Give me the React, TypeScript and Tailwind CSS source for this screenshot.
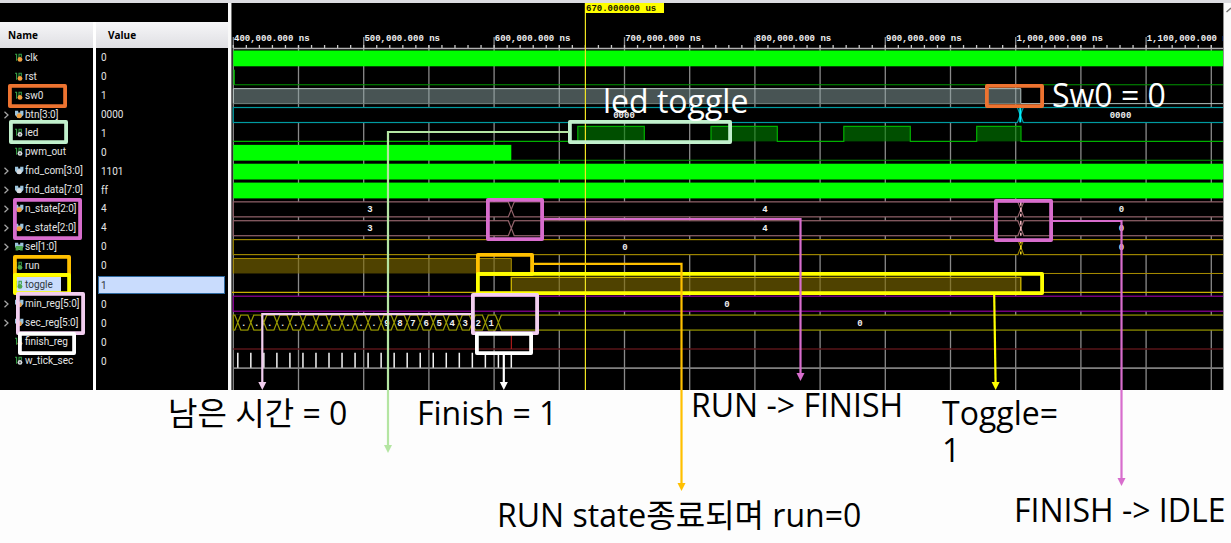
import React from "react";

type Kind = "in" | "out" | "busIn" | "busOut" | "reg" | "busReg" | "var" | "busVar";

interface Signal {
  name: string;
  value: string;
  kind: Kind;
}

const signals: Signal[] = [
  { name: "clk", value: "0", kind: "in" },
  { name: "rst", value: "0", kind: "in" },
  { name: "sw0", value: "1", kind: "in" },
  { name: "btn[3:0]", value: "0000", kind: "busIn" },
  { name: "led", value: "1", kind: "out" },
  { name: "pwm_out", value: "0", kind: "out" },
  { name: "fnd_com[3:0]", value: "1101", kind: "busOut" },
  { name: "fnd_data[7:0]", value: "ff", kind: "busOut" },
  { name: "n_state[2:0]", value: "4", kind: "busReg" },
  { name: "c_state[2:0]", value: "4", kind: "busReg" },
  { name: "sel[1:0]", value: "0", kind: "busVar" },
  { name: "run", value: "0", kind: "var" },
  { name: "toggle", value: "1", kind: "var" },
  { name: "min_reg[5:0]", value: "0", kind: "busReg" },
  { name: "sec_reg[5:0]", value: "0", kind: "busReg" },
  { name: "finish_reg", value: "0", kind: "reg" },
  { name: "w_tick_sec", value: "0", kind: "out" },
];

const SELECTED = "toggle";

/* Geometry of the wave area, in window pixels. */
const X0 = 233.3;
const X1 = 1223;
const STEP = 65.2;
const ROW = 18.87;
const hi = (row: number) => 50.9 + ROW * row;
const lo = (row: number) => hi(row) + 15;
const T_FINISH = 511.3;
const T_IDLE = 1020.8;
const TICK0 = 237.8;
const TICK = 13.03;

function SignalIcon({ kind }: { kind: Kind }) {
  const bus = kind.startsWith("bus");
  const dot =
    kind === "in" || kind === "busIn" || kind === "busReg" || kind === "reg"
      ? "#f0a040"
      : kind === "var" || kind === "busVar"
        ? "#4ea850"
        : "#d8dce0";
  return (
    <svg width="9" height="10" viewBox="0 0 9 10" aria-hidden="true" className="shrink-0">
      {bus ? (
        <>
          <path d="M0 0.8H3.2V2.6H5.2V0.8H8.4V5L5.6 8H2.8L0 5Z" fill="#9cc4dc" />
          {kind === "busVar" ? (
            <path d="M0.6 4H7.8V8.5H5.4L4.2 7.2L3 8.5H0.6Z" fill={dot} />
          ) : (
            <circle cx="4.2" cy="5.8" r="2.5" fill={dot} />
          )}
        </>
      ) : (
        <>
          <path d="M0 1.3H1.6V7.8M4 8V1.3H6.3V4" fill="none" stroke="#36a046" strokeWidth="1.1" />
          <circle cx="5" cy="6.4" r="2.4" fill={dot} />
          {kind === "out" && <circle cx="5" cy="6.4" r="0.9" fill="#555" />}
        </>
      )}
    </svg>
  );
}

function SignalTable() {
  return (
    <table className="h-[368px] w-full table-fixed border-separate border-spacing-0 text-left font-['Roboto',sans-serif] text-[10px] leading-[18px] text-[#e4e4e4]">
      <colgroup>
        <col className="w-[96px]" />
        <col />
      </colgroup>
      <thead>
        <tr className="h-[26px] bg-linear-to-b from-[#f6f6f8] to-[#dfdfe3] font-['Open_Sans',sans-serif] text-black">
          <th scope="col" className="border-r-3 border-white py-0 pr-0 pl-2 font-bold">Name</th>
          <th scope="col" className="py-0 pr-0 pl-3 font-bold">Value</th>
        </tr>
      </thead>
      <tbody>
        {signals.map((s) => {
          const selected = s.name === SELECTED;
          return (
            <tr key={s.name} aria-selected={selected}>
              <td className="border-r-3 border-white px-0 pt-px pb-0">
                <div className="flex h-[17px] items-center pl-1">
                  <div className="flex w-[11px] shrink-0 items-center">
                    {s.kind.startsWith("bus") && (
                      <button type="button" aria-label={`Expand ${s.name}`} className="flex">
                        <svg width="5" height="8" viewBox="0 0 5 8" aria-hidden="true">
                          <path d="M0.5 0.8L4 4L0.5 7.2" fill="none" stroke="#a8a8a8" strokeWidth="1.2" />
                        </svg>
                      </button>
                    )}
                  </div>
                  <div
                    className={
                      selected
                        ? "flex items-center gap-px bg-[#c9dcfd] pr-2 text-[#303840]"
                        : "flex items-center gap-px"
                    }
                  >
                    <SignalIcon kind={s.kind} />
                    <span>{s.name}</span>
                  </div>
                </div>
              </td>
              <td className="pt-px pr-[3px] pb-0 pl-[2px]">
                <div
                  className={
                    selected
                      ? "h-[18px] border border-[#2f6aa0] bg-[#c9dcfd] px-[2px] leading-[17px] text-[#303840]"
                      : "h-[17px] px-[3px]"
                  }
                >
                  {s.value}
                </div>
              </td>
            </tr>
          );
        })}
        <tr aria-hidden="true" className="h-[20px]">
          <td className="border-r-3 border-white p-0" />
          <td className="p-0" />
        </tr>
      </tbody>
    </table>
  );
}

function BusLine({ row, color, cuts = [] }: { row: number; color: string; cuts?: number[] }) {
  const t = hi(row);
  const b = lo(row);
  return (
    <g stroke={color} strokeWidth="1.2" fill="none">
      <rect x={X0} y={t} width={X1 - X0 + 4} height={b - t} fill="#000" />
      {cuts.map((x) => (
        <g key={x}>
          <path d={`M${x - 2.5} ${t}H${x + 2.5}M${x - 2.5} ${b}H${x + 2.5}`} stroke="#000" strokeWidth="1.8" />
          <path d={`M${x - 3} ${t}L${x + 3} ${b}M${x + 3} ${t}L${x - 3} ${b}`} />
        </g>
      ))}
    </g>
  );
}

function Label({ x, row, children }: { x: number; row: number; children: string }) {
  return (
    <text x={x} y={hi(row) + 10.6} textAnchor="middle" fill="#f0f0f0">
      {children}
    </text>
  );
}

const rulerLabels = [
  "400,000.000 ns",
  "500,000.000 ns",
  "600,000.000 ns",
  "700,000.000 ns",
  "800,000.000 ns",
  "900,000.000 ns",
  "1,000,000.000 ns",
  "1,100,000.000 ns",
];

const ledPulses: [number, number][] = [
  [577.8, 644.3],
  [711, 777.3],
  [843.8, 910.3],
  [976.7, 1021],
];

function Waves() {
  const minor = Array.from({ length: 76 }, (_, i) => X0 + (i * STEP) / 5);
  const half = Array.from({ length: 16 }, (_, i) => X0 + i * STEP);
  const secLabels = [...Array<string>(11).fill("."), "9", "8", "7", "6", "5", "4", "3", "2", "1"];
  const secCuts = Array.from({ length: 21 }, (_, i) => TICK0 + i * TICK);
  const ledPath =
    `M${X0} ${lo(4)}` +
    ledPulses.map(([a, b]) => `H${a}V${hi(4)}H${b}V${lo(4)}`).join("") +
    `H${X1}`;
  return (
    <svg
      viewBox="232 3 991 387"
      preserveAspectRatio="xMinYMin meet"
      role="img"
      aria-label="Simulation waveforms"
      className="block h-[387px] w-full font-['Liberation_Mono',monospace] text-[9px] font-bold"
    >
      <g stroke="#8a8a8a" strokeWidth="1.3">
        {half.map((x, i) => (
          <path key={x} d={`M${x} ${i % 2 === 0 ? 37 : 45}V390`} />
        ))}
        {minor.map((x) => (
          <path key={x} d={`M${x} 45V48`} stroke="#c8c8c8" />
        ))}
        <path d={`M${X0} 48.5H${X1}`} stroke="#b0b0b0" />
      </g>
      {rulerLabels.map((t, i) => (
        <text key={t} x={X0 + 0.7 + i * STEP * 2} y="41" fill="#f0f0f0">
          {t}
        </text>
      ))}

      {[0, 6, 7].map((r) => (
        <rect key={r} x={X0} y={hi(r) - 0.4} width={X1 - X0} height="15.8" fill="#00ff00" />
      ))}
      <rect x={X0} y={hi(5) - 0.4} width={T_FINISH - X0} height="15.8" fill="#00ff00" />

      <g fill="none" stroke="#009800">
        <path d={`M${T_FINISH} ${lo(5)}H${X1}`} />
        <path d={`M${X0 + 1} ${hi(1)}V${lo(1)}H${X1}`} />
      </g>
      <path d={`M${X0 + 0.7} ${hi(1)}V${lo(1)}`} stroke="#00c800" />

      <rect x={X0} y={hi(2)} width={T_IDLE - X0} height="15" fill="#8fa8a8" fillOpacity="0.5" />
      <path d={`M${X0} ${lo(2)}V${hi(2)}H${T_IDLE}V${lo(2)}H${X1}`} fill="none" stroke="#b4c4c0" />
      <path d={`M${X0} ${lo(2)}H${T_IDLE}`} stroke="#748480" />

      <BusLine row={3} color="#009aa0" cuts={[T_IDLE - 0.5]} />
      <path d={`M${T_IDLE - 0.5} ${hi(3)}V${lo(3)}`} stroke="#00f0ff" strokeWidth="2" />
      <Label x={624} row={3}>0000</Label>
      <Label x={1120.5} row={3}>0000</Label>

      {ledPulses.map(([a, b]) => (
        <rect key={a} x={a} y={hi(4)} width={b - a} height="15" fill="#008000" fillOpacity="0.62" />
      ))}
      <path d={ledPath} fill="none" stroke="#00b000" strokeWidth="1.2" />

      <BusLine row={8} color="#94646c" cuts={[T_FINISH, T_IDLE]} />
      <BusLine row={9} color="#94646c" cuts={[T_FINISH, T_IDLE]} />
      <path
        d={`M${T_IDLE} ${hi(8)}V${lo(8)}M${T_IDLE} ${hi(9)}V${lo(9)}`}
        stroke="#f0b4bc"
        strokeWidth="1.6"
        strokeDasharray="4 2"
      />
      {[8, 9].map((r) => (
        <g key={r}>
          <Label x={370} row={r}>3</Label>
          <Label x={765} row={r}>4</Label>
          <Label x={1121.5} row={r}>0</Label>
        </g>
      ))}

      <BusLine row={10} color="#9c8400" cuts={[T_IDLE]} />
      <path d={`M${T_IDLE} ${hi(10)}V${lo(10)}`} stroke="#f0d820" strokeWidth="1.6" strokeDasharray="4 2" />
      <Label x={625} row={10}>0</Label>
      <Label x={1121.5} row={10}>0</Label>

      <rect x={X0} y={hi(11)} width={T_FINISH - X0} height="15" fill="#806a00" fillOpacity="0.62" />
      <path d={`M${X0} ${lo(11)}V${hi(11)}H${T_FINISH}V${lo(11)}H${X1}`} fill="none" stroke="#a88c00" />

      <rect x={T_FINISH} y={hi(12)} width={T_IDLE - T_FINISH} height="15" fill="#806a00" fillOpacity="0.62" />
      <path
        d={`M232 ${lo(12)}H${T_FINISH}V${hi(12)}H${T_IDLE}V${lo(12)}H${X1}`}
        fill="none"
        stroke="#c8b000"
        strokeWidth="1.4"
      />

      <BusLine row={13} color="#90009a" />
      <Label x={727} row={13}>0</Label>

      <BusLine row={14} color="#989800" cuts={secCuts} />
      {secLabels.map((t, i) => (
        <Label key={i} x={TICK0 + (i + 0.45) * TICK} row={14}>{t}</Label>
      ))}
      <Label x={860} row={14}>0</Label>

      <path d={`M${X0} ${lo(15)}H${X1}`} stroke="#581418" strokeWidth="1.4" />
      <path d={`M${T_FINISH} ${hi(15)}V${lo(15)}`} stroke="#d02020" />

      <path d={`M${X0} ${lo(16) + 0.3}H${X1}`} stroke="#808080" strokeWidth="1.8" />
      <path
        d={[...secCuts, T_FINISH].map((x) => `M${x} ${hi(16)}V${lo(16)}`).join("")}
        stroke="#f4f4f4"
        strokeWidth="1.5"
      />

      <path d="M585.4 3V390" stroke="#f0e420" strokeWidth="1.2" />
      <rect x="585" y="3" width="79" height="10" fill="#ffff00" />
      <text x="586" y="11" fill="#202000">670.000000 us</text>
    </svg>
  );
}

interface Box {
  x: number;
  y: number;
  w: number;
  h: number;
  color: string;
}

/* Outer edges of the highlight frames. */
const boxes: Box[] = [
  { x: 8, y: 84, w: 59, h: 24, color: "#ed7330" },
  { x: 9, y: 120, w: 59, h: 24, color: "#c1f0cc" },
  { x: 13, y: 198, w: 69, h: 42, color: "#d86dcd" },
  { x: 13, y: 255, w: 58, h: 22, color: "#ffc000" },
  { x: 13, y: 273, w: 58, h: 22, color: "#ffff00" },
  { x: 16, y: 292, w: 69, h: 43, color: "#f2ceef" },
  { x: 18, y: 332, w: 58, h: 23, color: "#ffffff" },
  { x: 568, y: 120, w: 164, h: 24, color: "#c1f0cc" },
  { x: 985, y: 84, w: 59, h: 24, color: "#ed7330" },
  { x: 486, y: 198, w: 58, h: 43, color: "#d86dcd" },
  { x: 994, y: 199, w: 59, h: 43, color: "#d86dcd" },
  { x: 476, y: 253, w: 58, h: 23, color: "#ffc000" },
  { x: 476, y: 272, w: 568, h: 23, color: "#ffff00" },
  { x: 471, y: 293, w: 68, h: 42, color: "#f2ceef" },
  { x: 475, y: 332, w: 58, h: 23, color: "#ffffff" },
];

const arrows = [
  { d: "M569 132H388V446", x: 388, tip: 453, color: "#b4e5a2" },
  { d: "M544 219H800.5V375", x: 800.5, tip: 381, color: "#d86dcd" },
  { d: "M1052 221H1121.5V480", x: 1121.5, tip: 486, color: "#d86dcd" },
  { d: "M534 263.8H681.5V485", x: 681.5, tip: 491, color: "#ffc000" },
  { d: "M471 314.2H262.3V384", x: 262.3, tip: 390, color: "#f2ceef" },
  { d: "M503.8 354V384", x: 503.8, tip: 390, color: "#ffffff" },
  { d: "M994.2 295L995.6 384", x: 995.6, tip: 390, color: "#ffff00" },
];

function Annotations() {
  return (
    <svg aria-hidden="true" className="pointer-events-none absolute inset-0 h-full w-full">
      {boxes.map((b, i) => (
        <rect
          key={i}
          x={b.x + 1.9}
          y={b.y + 1.9}
          width={b.w - 3.8}
          height={b.h - 3.8}
          fill="none"
          stroke={b.color}
          strokeWidth="3.8"
          strokeLinejoin="round"
        />
      ))}
      {arrows.map((a, i) => (
        <g key={i}>
          <path d={a.d} fill="none" stroke={a.color} strokeWidth="2.2" />
          <path d={`M${a.x - 4} ${a.tip - 8}H${a.x + 4}L${a.x} ${a.tip}Z`} fill={a.color} />
        </g>
      ))}
    </svg>
  );
}

function Caption({ className, children }: { className: string; children: React.ReactNode }) {
  return (
    <p
      className={`absolute font-['Open_Sans','Noto_Sans_CJK_KR',sans-serif] text-[32px] leading-[37px] whitespace-nowrap ${className}`}
    >
      {children}
    </p>
  );
}

export default function App() {
  return (
    <main className="relative min-h-screen overflow-hidden bg-[#fdfdfd]">
      <div className="flex border-t-3 border-[#dcdce0]">
        <section aria-label="Signals" className="w-[228px] shrink-0 bg-black pt-[19px]">
          <SignalTable />
        </section>
        <div className="w-[4px] shrink-0 border-r border-[#707070] bg-[#f8f8f8]" />
        <section aria-label="Waveforms" className="min-w-0 flex-1 bg-black">
          <Waves />
        </section>
        <div className="flex w-[8px] shrink-0 justify-end border-l border-[#909090] bg-[#fbfbfb] pt-1">
          <svg width="5" height="6" viewBox="0 0 5 6" aria-hidden="true">
            <path d="M0.5 5L5 1" fill="none" stroke="#707070" strokeWidth="1.4" />
          </svg>
        </div>
      </div>

      <Annotations />

      <Caption className="top-[82px] left-[603px] text-white">led toggle</Caption>
      <Caption className="top-[76px] left-[1052px] text-white">Sw0 = 0</Caption>
      <Caption className="top-[394px] left-[168px] text-black">남은 시간 = 0</Caption>
      <Caption className="top-[394px] left-[417px] text-black">Finish = 1</Caption>
      <Caption className="top-[386px] left-[691px] text-black">RUN -&gt; FINISH</Caption>
      <Caption className="top-[394px] left-[942px] text-black">
        Toggle=
        <br />1
      </Caption>
      <Caption className="top-[491px] left-[1014px] text-black">FINISH -&gt; IDLE</Caption>
      <Caption className="top-[496px] left-[497px] text-black">RUN state종료되며 run=0</Caption>
    </main>
  );
}
